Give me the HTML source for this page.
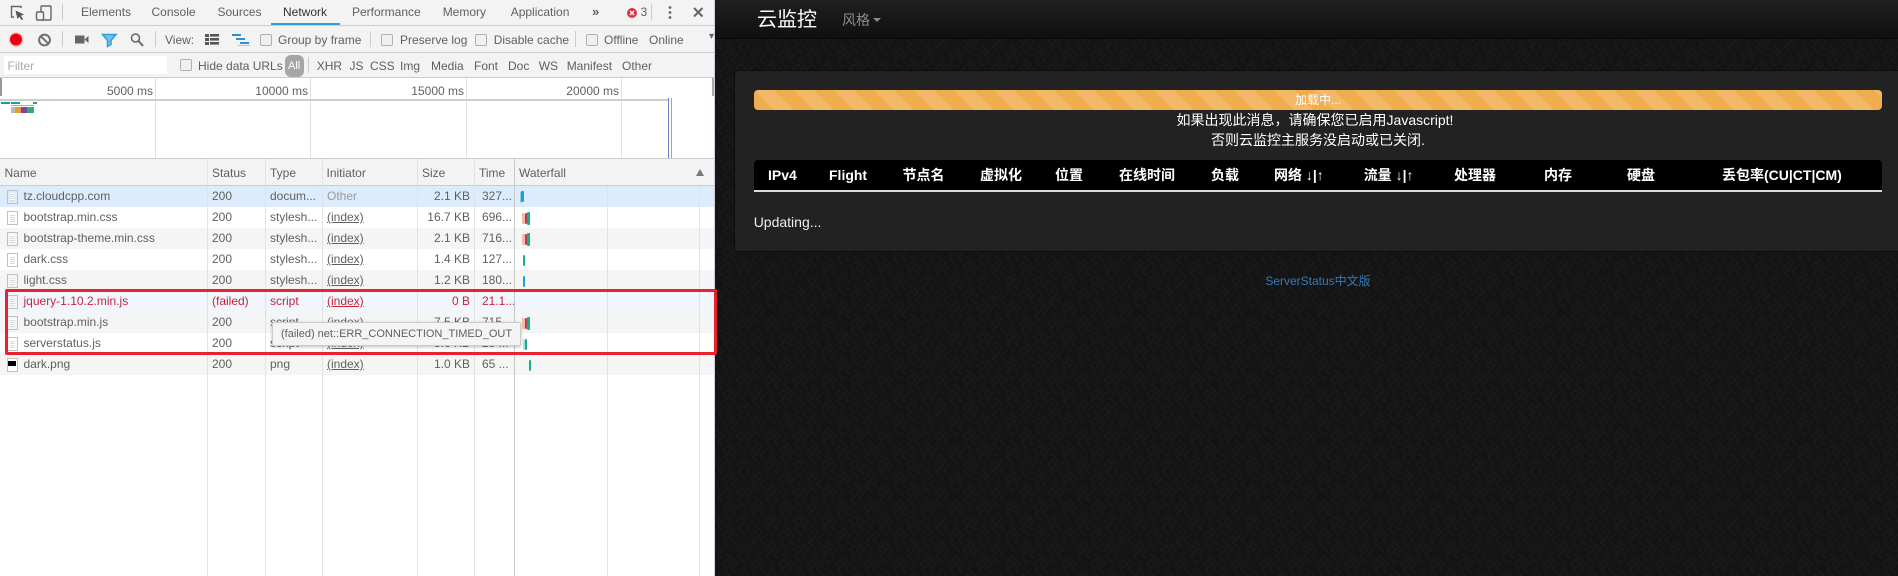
<!DOCTYPE html>
<html lang="zh"><head><meta charset="utf-8"><title>云监控</title>
<style>
html,body{margin:0;padding:0;width:1898px;height:576px;overflow:hidden;background:#161616}
*{box-sizing:border-box}
#dt{position:absolute;left:0;top:0;width:715px;height:576px;background:#fff;overflow:hidden;font:12px "Liberation Sans",sans-serif;color:#606060;border-right:1px solid #d4cce0}
#dt span,#dt i,#dt b,#dt svg{position:absolute;white-space:nowrap;font-style:normal;font-weight:normal}
.bar{position:absolute;left:0;width:714px;background:#f3f3f3;border-bottom:1px solid #ccc}
.sep{width:1px;background:#ccc}
.cb{width:12px;height:12px;border:1px solid #b0b0b0;border-radius:2px;background:#f0f0f0}
.rw{position:absolute;left:0;width:714px;height:21px;line-height:21px}
.rw span{top:0;line-height:21px}
.ic{position:absolute;left:6.5px;top:3.5px;width:11px;height:14px;border:1px solid #c0c0c0;background-color:#fff;background-image:repeating-linear-gradient(#fff 0 1px,#d8d8d8 1px 2px);background-clip:content-box;padding:2px}
.n{left:23.5px}.s{left:212px}.t{left:270px}.in{left:327px;text-decoration:underline}
.z{right:244px}.m{left:482px}
.f span{color:#c8243c}
.vl{position:absolute;width:1px;top:159px;bottom:0;background:#e2e2e2}
.wb{position:absolute;height:11px;border-radius:1px}
#r{position:absolute;left:715px;top:0;width:1183px;height:576px;overflow:hidden;color:#fff;font:14px "Liberation Sans","Noto Sans CJK SC",sans-serif}
#r span,#r div.a{position:absolute;white-space:nowrap}
#nav{position:absolute;left:0;top:0;width:1183px;height:39px;background:linear-gradient(#1f1f1f,#101010);border-bottom:1px solid #0a0a0a}
#card{position:absolute;left:19px;top:70px;width:1170px;height:182px;background:#222;border:1px solid #0c0c0c;border-radius:4px}
#prog{position:absolute;left:39px;top:90px;width:1128px;height:20px;border-radius:4px;background-color:#f0ad4e;background-image:linear-gradient(45deg,rgba(255,255,255,.15) 25%,transparent 25%,transparent 50%,rgba(255,255,255,.15) 50%,rgba(255,255,255,.15) 75%,transparent 75%,transparent);background-size:40px 40px;text-align:center;font-size:12px;line-height:20px}
#th{position:absolute;left:39px;top:160px;width:1128px;height:32px;background:#000;border-bottom:2px solid #ddd;border-radius:4px 4px 0 0}
.h{top:166px;font-weight:bold;line-height:18px}
.c{left:39px;width:1128px;text-align:center;line-height:20px}
</style></head><body>
<div id="dt">
<div class="bar" style="top:0;height:26px"></div>
<div class="bar" style="top:26px;height:27px"></div>
<div class="bar" style="top:53px;height:25px"></div>

<svg style="left:9px;top:5px" width="46" height="16" viewBox="0 0 46 16" fill="none">
<path d="M12 3V1.5H2.5V12H5" stroke="#666" stroke-width="1.4"/><path d="M6.5 5.5 15 9.5l-3.2 1.2 2.4 3.4-1.5 1-2.3-3.4-2 2.2z" fill="#555"/>
<rect x="32" y="1" width="10" height="14" rx="1" stroke="#666" stroke-width="1.4"/><rect x="27.5" y="7" width="7" height="8" rx="1" fill="#f3f3f3" stroke="#666" stroke-width="1.4"/></svg>
<i class="sep" style="left:62px;top:4px;height:16px"></i>
<span style="left:81px;top:5px">Elements</span><span style="left:151.5px;top:5px">Console</span><span style="left:217.5px;top:5px">Sources</span><span style="left:283px;top:5px;color:#333">Network</span>
<i style="left:271px;top:23px;width:69px;height:2px;background:#2d9fdc"></i>
<span style="left:352px;top:5px">Performance</span><span style="left:442.7px;top:5px">Memory</span><span style="left:510.7px;top:5px">Application</span>
<span style="left:592px;top:4px;font-weight:bold;font-size:13px">»</span>
<svg style="left:626px;top:7px" width="12" height="12" viewBox="0 0 12 12"><circle cx="6" cy="6" r="5" fill="#e0344a"/><path d="M4 4l4 4M8 4l-4 4" stroke="#fff" stroke-width="1.3"/></svg>
<span style="left:640.5px;top:5px">3</span><i class="sep" style="left:651px;top:4px;height:16px"></i>
<svg style="left:667px;top:5px" width="40" height="16" viewBox="0 0 40 16"><g fill="#666"><circle cx="3" cy="2.5" r="1.4"/><circle cx="3" cy="7.5" r="1.4"/><circle cx="3" cy="12.5" r="1.4"/></g><path d="M27 3l8.5 8.5M35.5 3 27 11.5" stroke="#666" stroke-width="2"/></svg>

<svg style="left:8px;top:31px" width="150" height="18" viewBox="0 0 150 18" fill="none">
<circle cx="8" cy="8.5" r="7.500" fill="#f8c8c8"/><circle cx="8" cy="8.5" r="6" fill="#e60012"/>
<circle cx="36.500" cy="9" r="5.400" stroke="#6e6e6e" stroke-width="2"/><path d="M32.800 5.200l7.500 7.500" stroke="#6e6e6e" stroke-width="2"/>
<rect x="67" y="4.500" width="9.500" height="8" fill="#666"/><path d="M76.500 8.500l4-3.500v7z" fill="#666"/>
<path d="M94.500 3.500h13.500l-5 6v4l-3.500 2v-6z" fill="#6ec2ee" stroke="#2d9fdc" stroke-width="1.500"/>
<circle cx="127.500" cy="7" r="4" stroke="#666" stroke-width="1.500"/><path d="M130.500 10l4.500 5" stroke="#666" stroke-width="2"/></svg>
<i class="sep" style="left:62px;top:31px;height:16px"></i><i class="sep" style="left:155px;top:31px;height:16px"></i>
<span style="left:165px;top:33px">View:</span>
<svg style="left:205px;top:34px" width="46" height="12" viewBox="0 0 46 12"><g fill="#555"><rect width="4" height="3"/><rect y="4" width="4" height="3"/><rect y="8" width="4" height="3"/><rect x="5" width="9" height="2.600"/><rect x="5" y="4" width="9" height="2.600"/><rect x="5" y="8" width="9" height="2.600"/></g><g fill="#2d8fd0"><rect x="27" y="0" width="9" height="2"/><rect x="31" y="4" width="9" height="2"/><rect x="35" y="8" width="9" height="2"/></g><rect x="33" y="11" width="12" height="1" fill="#9ccbe8"/></svg>
<i class="cb" style="left:260px;top:34px"></i><span style="left:278px;top:33px">Group by frame</span><i class="sep" style="left:370px;top:31px;height:16px"></i>
<i class="cb" style="left:381px;top:34px"></i><span style="left:400px;top:33px">Preserve log</span>
<i class="cb" style="left:475px;top:34px"></i><span style="left:493.700px;top:33px">Disable cache</span><i class="sep" style="left:575px;top:31px;height:16px"></i>
<i class="cb" style="left:586px;top:34px"></i><span style="left:604px;top:33px">Offline</span><span style="left:649px;top:33px">Online</span><span style="left:709px;top:31px;font-size:10px">▾</span>

<i style="left:4px;top:56px;width:163px;height:18px;background:#fff"></i><span style="left:7.500px;top:59px;color:#aaa">Filter</span>
<i class="cb" style="left:180px;top:59px"></i><span style="left:198px;top:59px">Hide data URLs</span>
<i style="left:285px;top:55px;width:19px;height:22px;background:#a6a6a6;border-radius:6px"></i><span style="left:288px;top:60px;color:#fff;font-size:11px">All</span><i class="sep" style="left:308px;top:57px;height:16px"></i>
<span style="left:316.700px;top:59px">XHR</span><span style="left:349.500px;top:59px">JS</span><span style="left:370px;top:59px">CSS</span><span style="left:400px;top:59px">Img</span><span style="left:431px;top:59px">Media</span><span style="left:474px;top:59px">Font</span><span style="left:508px;top:59px">Doc</span><span style="left:538.700px;top:59px">WS</span><span style="left:566.700px;top:59px">Manifest</span><span style="left:622px;top:59px">Other</span>

<i style="left:0;top:78px;width:2px;height:18px;background:#999"></i><i style="left:712px;top:78px;width:2px;height:18px;background:#aaa"></i>
<i style="left:155px;top:78px;width:1px;height:80px;background:#e0e0e0"></i><i style="left:310px;top:78px;width:1px;height:80px;background:#e0e0e0"></i><i style="left:466px;top:78px;width:1px;height:80px;background:#e0e0e0"></i><i style="left:621px;top:78px;width:1px;height:80px;background:#e0e0e0"></i>
<span style="right:561px;top:84px">5000 ms</span><span style="right:406px;top:84px">10000 ms</span><span style="right:250px;top:84px">15000 ms</span><span style="right:95px;top:84px">20000 ms</span>
<i style="left:0;top:99px;width:668px;height:2px;background:#ccc"></i>
<i style="left:668px;top:98px;width:1px;height:60px;background:#6a7cc8"></i><i style="left:671px;top:98px;width:1px;height:60px;background:#e08a90"></i>
<i style="left:1px;top:102px;width:9px;height:1.500px;background:#1aa08c"></i><i style="left:11px;top:102px;width:9px;height:1.500px;background:#1aa08c"></i><i style="left:33px;top:102px;width:4px;height:1.500px;background:#1aa08c"></i>
<i style="left:11px;top:105px;width:23px;height:1px;background:#aaa"></i>
<i style="left:11px;top:106.500px;width:4px;height:3px;background:#bbb"></i><i style="left:15px;top:106.500px;width:6px;height:3px;background:#e0a030"></i><i style="left:21px;top:106.500px;width:6px;height:3px;background:#8a3f9e"></i><i style="left:27px;top:106.500px;width:7px;height:3px;background:#2cb070"></i>
<i style="left:11px;top:110px;width:4px;height:3px;background:#bbb"></i><i style="left:15px;top:110px;width:6px;height:3px;background:#e0a030"></i><i style="left:21px;top:110px;width:6px;height:3px;background:#8a3f9e"></i><i style="left:27px;top:110px;width:7px;height:3px;background:#2cb070"></i>
<i style="left:0;top:158px;width:714px;height:1px;background:#ccc"></i>

<div class="bar" style="top:159px;height:27px"></div>
<span style="left:4.500px;top:166px">Name</span><span style="left:212px;top:166px">Status</span><span style="left:270px;top:166px">Type</span><span style="left:326.500px;top:166px">Initiator</span><span style="left:422px;top:166px">Size</span><span style="left:479px;top:166px">Time</span><span style="left:519px;top:166px">Waterfall</span>
<svg style="left:696px;top:169px" width="8" height="7"><path d="M4 0l4 7H0z" fill="#777"/></svg>

<div class="rw" style="top:186px;background:#dcecfc"><i class="ic"></i><span class="n">tz.cloudcpp.com</span><span class="s">200</span><span class="t">docum...</span><span style="left:327px;color:#999">Other</span><span class="z">2.1 KB</span><span class="m">327...</span></div>
<div class="rw" style="top:207px"><i class="ic"></i><span class="n">bootstrap.min.css</span><span class="s">200</span><span class="t">stylesh...</span><span class="in">(index)</span><span class="z">16.7 KB</span><span class="m">696...</span></div>
<div class="rw" style="top:228px;background:#f5f5f5"><i class="ic"></i><span class="n">bootstrap-theme.min.css</span><span class="s">200</span><span class="t">stylesh...</span><span class="in">(index)</span><span class="z">2.1 KB</span><span class="m">716...</span></div>
<div class="rw" style="top:249px"><i class="ic"></i><span class="n">dark.css</span><span class="s">200</span><span class="t">stylesh...</span><span class="in">(index)</span><span class="z">1.4 KB</span><span class="m">127...</span></div>
<div class="rw" style="top:270px;background:#f5f5f5"><i class="ic"></i><span class="n">light.css</span><span class="s">200</span><span class="t">stylesh...</span><span class="in">(index)</span><span class="z">1.2 KB</span><span class="m">180...</span></div>
<div class="rw f" style="top:291px;background:#f1f6fd"><i class="ic"></i><span class="n">jquery-1.10.2.min.js</span><span class="s">(failed)</span><span class="t">script</span><span class="in">(index)</span><span class="z">0 B</span><span class="m">21.1...</span></div>
<div class="rw" style="top:312px;background:#f4f5f7"><i class="ic"></i><span class="n">bootstrap.min.js</span><span class="s">200</span><span class="t">script</span><span class="in">(index)</span><span class="z">7.5 KB</span><span class="m">715...</span></div>
<div class="rw" style="top:333px"><i class="ic"></i><span class="n">serverstatus.js</span><span class="s">200</span><span class="t">script</span><span class="in">(index)</span><span class="z">5.6 KB</span><span class="m">25 ...</span></div>
<div class="rw" style="top:354px;background:#f5f5f5"><i class="ic" style="background:#fff;padding:0"></i><i style="left:8px;top:7px;width:8px;height:5px;background:#000"></i><span class="n">dark.png</span><span class="s">200</span><span class="t">png</span><span class="in">(index)</span><span class="z">1.0 KB</span><span class="m">65 ...</span></div>

<i class="vl" style="left:207px"></i><i class="vl" style="left:265px"></i><i class="vl" style="left:322px"></i><i class="vl" style="left:417px"></i><i class="vl" style="left:474px"></i><i class="vl" style="left:514px;background:#c8c8c8"></i>
<i class="vl" style="left:607px;top:186px"></i><i class="vl" style="left:699px;top:186px"></i>

<i class="wb" style="left:520px;top:192px;width:1px;background:#9cc"></i><i class="wb" style="left:521px;top:191px;width:3px;background:#1aa0d8"></i>
<i class="wb" style="left:522px;top:213px;width:3px;background:#eec09a"></i><i class="wb" style="left:525px;top:213px;width:2px;background:#b03a6a"></i><i class="wb" style="left:527px;top:212px;width:3px;height:13px;background:#16b088"></i>
<i class="wb" style="left:522px;top:234px;width:3px;background:#eec09a"></i><i class="wb" style="left:525px;top:234px;width:2px;background:#b03a6a"></i><i class="wb" style="left:527px;top:233px;width:3px;height:13px;background:#16b088"></i>
<i class="wb" style="left:523px;top:255px;width:2px;background:#18b090"></i>
<i class="wb" style="left:523px;top:276px;width:2px;background:#1e9fd8"></i>
<i class="wb" style="left:522px;top:318px;width:3px;background:#eec09a"></i><i class="wb" style="left:525px;top:318px;width:2px;background:#b03a6a"></i><i class="wb" style="left:527px;top:317px;width:3px;height:13px;background:#16b088"></i>
<i class="wb" style="left:523px;top:339px;width:2px;background:#b8e0d0"></i><i class="wb" style="left:525px;top:339px;width:2px;background:#16a898"></i>
<i class="wb" style="left:529px;top:360px;width:2px;background:#16b090"></i>

<span style="left:272px;top:322px;width:249px;height:24px;background:#f4f4f4;border:1px solid #ccc;border-radius:2px;box-shadow:0 1px 3px rgba(0,0,0,.25);font-size:11px;line-height:22px;padding-left:8px">(failed) net::ERR_CONNECTION_TIMED_OUT</span>
</div>

<div id="r">
<svg style="position:absolute;left:0;top:0" width="1183" height="576"><defs><pattern id="p" width="20" height="20" patternUnits="userSpaceOnUse" patternTransform="rotate(45)"><rect width="20" height="20" fill="#141414"/><path d="M0 3h10v4H4v6h6M10 3v14h10M14 0v10h6" fill="none" stroke="#191919" stroke-width="2"/></pattern></defs><rect width="1183" height="576" fill="url(#p)"/></svg>
<div id="nav"></div>
<span style="left:42px;top:7px;font-size:20px;line-height:26px;color:#fff">云监控</span>
<span style="left:127px;top:10px;color:#8c8c8c;line-height:20px">风格</span>
<i style="position:absolute;left:158px;top:18px;border:4px solid transparent;border-top-color:#8c8c8c;border-bottom:0"></i>
<div id="card"></div>
<div id="prog">加载中...</div>
<div class="a c" style="top:110px;left:36px">如果出现此消息，请确保您已启用Javascript!</div>
<div class="a c" style="top:130px">否则云监控主服务没启动或已关闭.</div>
<div id="th"></div>
<span class="h" style="left:53px">IPv4</span><span class="h" style="left:114px">Flight</span><span class="h" style="left:187.500px">节点名</span><span class="h" style="left:265px">虚拟化</span><span class="h" style="left:340px">位置</span><span class="h" style="left:404px">在线时间</span><span class="h" style="left:496px">负载</span><span class="h" style="left:559px">网络 ↓|↑</span><span class="h" style="left:648.700px">流量 ↓|↑</span><span class="h" style="left:739px">处理器</span><span class="h" style="left:829px">内存</span><span class="h" style="left:912px">硬盘</span><span class="h" style="left:1007px">丢包率(CU|CT|CM)</span>
<span style="left:38.700px;top:214px;line-height:16px;color:#eee">Updating...</span>
<div class="a" style="left:39px;width:1128px;top:273px;text-align:center;font-size:12px;line-height:16px;color:#337ab7">ServerStatus中文版</div>
</div>

<i style="position:absolute;left:5px;top:289px;width:712px;height:66px;border:3px solid #e8212f;border-radius:2px"></i>
</body></html>
